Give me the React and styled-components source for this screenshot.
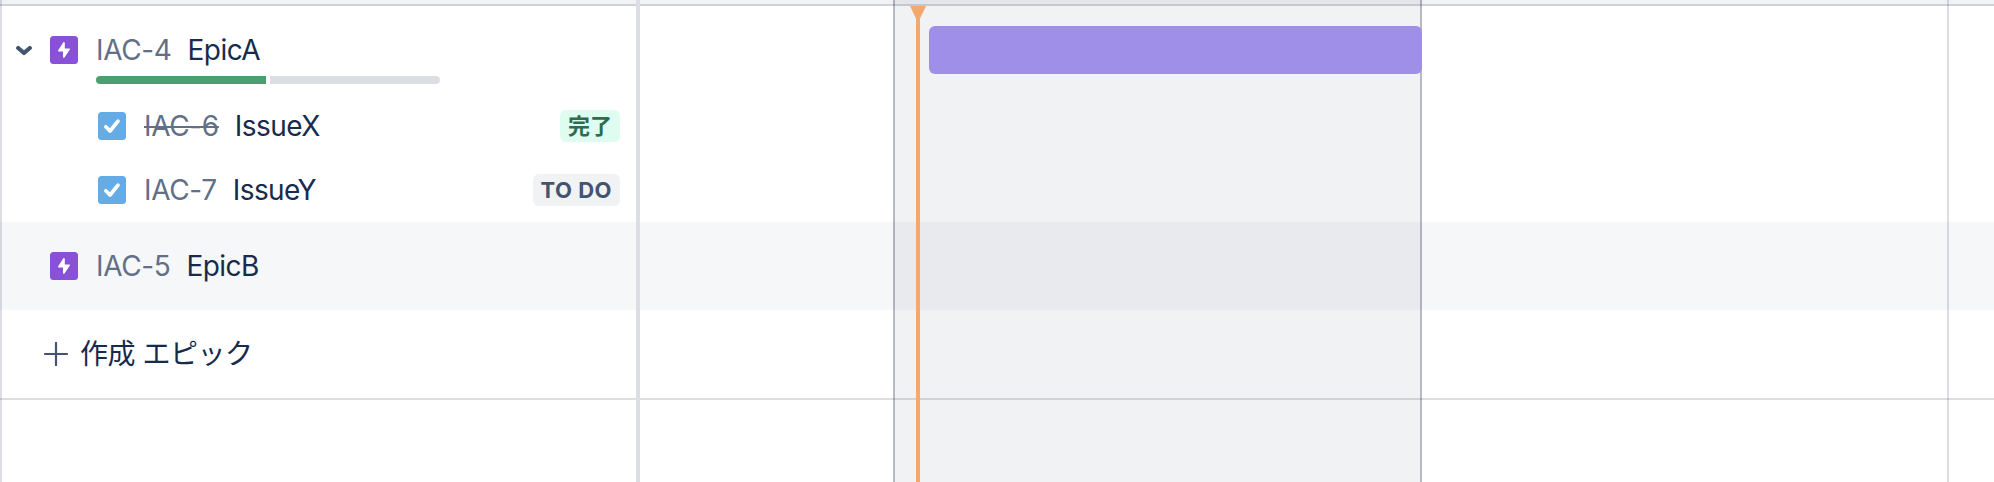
import React from "react";
import styled, { createGlobalStyle } from "styled-components";

const GlobalStyle = createGlobalStyle`
  * { box-sizing: border-box; }
  body {
    margin: 0;
    background: #fff;
    color: #172b4d;
    font-family: Inter, "Noto Sans CJK JP", sans-serif;
    overflow: hidden;
  }
`;

const LINE = "rgba(11, 18, 60, 0.14)";

const Roadmap = styled.div`
  display: grid;
  grid-template-columns: 636px 4px 1fr;
  height: 482px;
`;

const Sidebar = styled.div`
  display: flex;
  flex-direction: column;
  position: relative;
  &::before {
    content: "";
    position: absolute;
    inset: 0 auto 0 0;
    width: 2px;
    background: ${LINE};
  }
`;

const Divider = styled.div`
  background: #dddee4;
`;

const HeaderStrip = styled.div`
  height: 6px;
  background: rgba(9, 30, 66, 0.06);
  border-bottom: 2px solid ${LINE};
`;

const Row = styled.div`
  display: flex;
  align-items: center;
  height: ${(p) => p.$h}px;
  padding-left: ${(p) => p.$indent || 0}px;
  padding-right: 16px;
  background: ${(p) => (p.$hover ? "rgba(9, 30, 66, 0.035)" : "transparent")};
  border-bottom: ${(p) => (p.$line ? `2px solid ${LINE}` : "0")};
`;

const EpicBlock = styled.div`
  height: 88px;
  padding-top: 18px;
`;

const Chevron = styled.svg`
  width: 16px;
  height: 16px;
  margin-right: 18px;
`;

const TypeIcon = styled.svg`
  width: 28px;
  height: 28px;
  flex: none;
`;

const Key = styled.span`
  margin-left: 18px;
  font-size: 28px;
  line-height: 40px;
  letter-spacing: -0.35px;
  color: #626f86;
  text-decoration: ${(p) => (p.$done ? "line-through" : "none")};
`;

const Summary = styled.span`
  margin-left: 16px;
  font-size: 28px;
  line-height: 40px;
  letter-spacing: -0.55px;
`;

const Progress = styled.div`
  display: flex;
  gap: 4px;
  width: 344px;
  height: 8px;
  margin-left: 96px;
  border-radius: 4px;
  overflow: hidden;
`;

const Segment = styled.div`
  flex: 1;
  background: ${(p) => (p.$done ? "#4c9f70" : "#dddee4")};
`;

const Badge = styled.span`
  margin-left: auto;
  height: 32px;
  padding: 0 8px;
  border-radius: 6px;
  font-size: 22px;
  font-weight: 700;
  line-height: 32px;
  letter-spacing: ${(p) => (p.$done ? 0 : 0.5)}px;
  white-space: nowrap;
  color: ${(p) => (p.$done ? "#2f6b4e" : "#44546f")};
  background: ${(p) => (p.$done ? "#dffcf0" : "#f1f2f4")};
`;

const PlusIcon = styled.svg`
  width: 24px;
  height: 24px;
`;

const CreateLabel = styled.span`
  margin-left: 12px;
  font-size: 28px;
  line-height: 40px;
  letter-spacing: -0.5px;
`;

const Timeline = styled.div`
  display: grid;
  position: relative;
  > * { grid-area: 1 / 1; }
`;

const Months = styled.div`
  display: grid;
  grid-template-columns: 253px 529px 527px 1fr;
`;

const Month = styled.div`
  border-right: ${(p) => (p.$end ? `2px solid ${LINE}` : "0")};
`;

const CurrentMonth = styled.div`
  background: rgba(9, 30, 66, 0.06);
  border: solid #b7b9c4;
  border-width: 0 2px;
  background-clip: padding-box;
`;

const Lanes = styled.div`
  display: flex;
  flex-direction: column;
`;

const EpicBar = styled.div`
  width: 493px;
  height: 48px;
  margin-left: 289px;
  border-radius: 6px;
  background: #9f8fe8;
`;

const Today = styled.svg`
  position: absolute;
  left: 270px;
  top: 6px;
  width: 16px;
  height: 476px;
`;

const EpicIcon = () => (
  <TypeIcon viewBox="0 0 28 28">
    <rect width="28" height="28" rx="3.5" fill="#8950d8" />
    <path
      d="M13.2 6.5 8.1 14.5a.7.7 0 0 0 .6 1.1h4.3v5.4c0 .9.9 1.2 1.5.4l5.4-7.9a.7.7 0 0 0-.6-1.1h-4.5V7c0-1-1-1.300-1.600-.5z"
      fill="#fff"
    />
  </TypeIcon>
);

const TaskIcon = () => (
  <TypeIcon viewBox="0 0 28 28">
    <rect width="28" height="28" rx="3.5" fill="#65abe6" />
    <path
      d="M7.8 14.8l4.2 4.2 8-9.900"
      fill="none"
      stroke="#fff"
      strokeWidth="3.7"
      strokeLinecap="round"
      strokeLinejoin="round"
    />
  </TypeIcon>
);

const issues = [
  { key: "IAC-6", name: "IssueX", status: "完了", done: true },
  { key: "IAC-7", name: "IssueY", status: "TO DO", done: false },
];

export default function App() {
  return (
    <>
      <GlobalStyle />
      <Roadmap>
        <Sidebar>
          <HeaderStrip />
          <EpicBlock>
            <Row $h={52} $indent={16}>
              <Chevron viewBox="0 0 16 16">
                <path
                  d="M2.200 6 8 11l5.800-5"
                  fill="none"
                  stroke="#44546f"
                  strokeWidth="4.2"
                  strokeLinecap="round"
                  strokeLinejoin="round"
                />
              </Chevron>
              <EpicIcon />
              <Key>IAC-4</Key>
              <Summary>EpicA</Summary>
            </Row>
            <Progress>
              <Segment $done />
              <Segment />
            </Progress>
          </EpicBlock>
          {issues.map((i) => (
            <Row key={i.key} $h={64} $indent={98}>
              <TaskIcon />
              <Key $done={i.done}>{i.key}</Key>
              <Summary>{i.name}</Summary>
              <Badge $done={i.done}>{i.status}</Badge>
            </Row>
          ))}
          <Row $h={88} $indent={50} $hover>
            <EpicIcon />
            <Key>IAC-5</Key>
            <Summary>EpicB</Summary>
          </Row>
          <Row $h={90} $indent={44} $line>
            <PlusIcon viewBox="0 0 24 24">
              <path
                d="M12 1v22M1 12h22"
                stroke="#44546f"
                strokeWidth="2.2"
                strokeLinecap="round"
              />
            </PlusIcon>
            <CreateLabel>作成 エピック</CreateLabel>
          </Row>
        </Sidebar>
        <Divider />
        <Timeline>
          <Months>
            <Month />
            <CurrentMonth />
            <Month $end />
            <Month />
          </Months>
          <Lanes>
            <HeaderStrip />
            <Row $h={88}>
              <EpicBar />
            </Row>
            <Row $h={64} />
            <Row $h={64} />
            <Row $h={88} $hover />
            <Row $h={90} $line />
          </Lanes>
          <Today viewBox="0 0 16 476">
            <path d="M0 0h16l-6 12.5V476H6V12.500z" fill="#f2a86e" />
          </Today>
        </Timeline>
      </Roadmap>
    </>
  );
}
